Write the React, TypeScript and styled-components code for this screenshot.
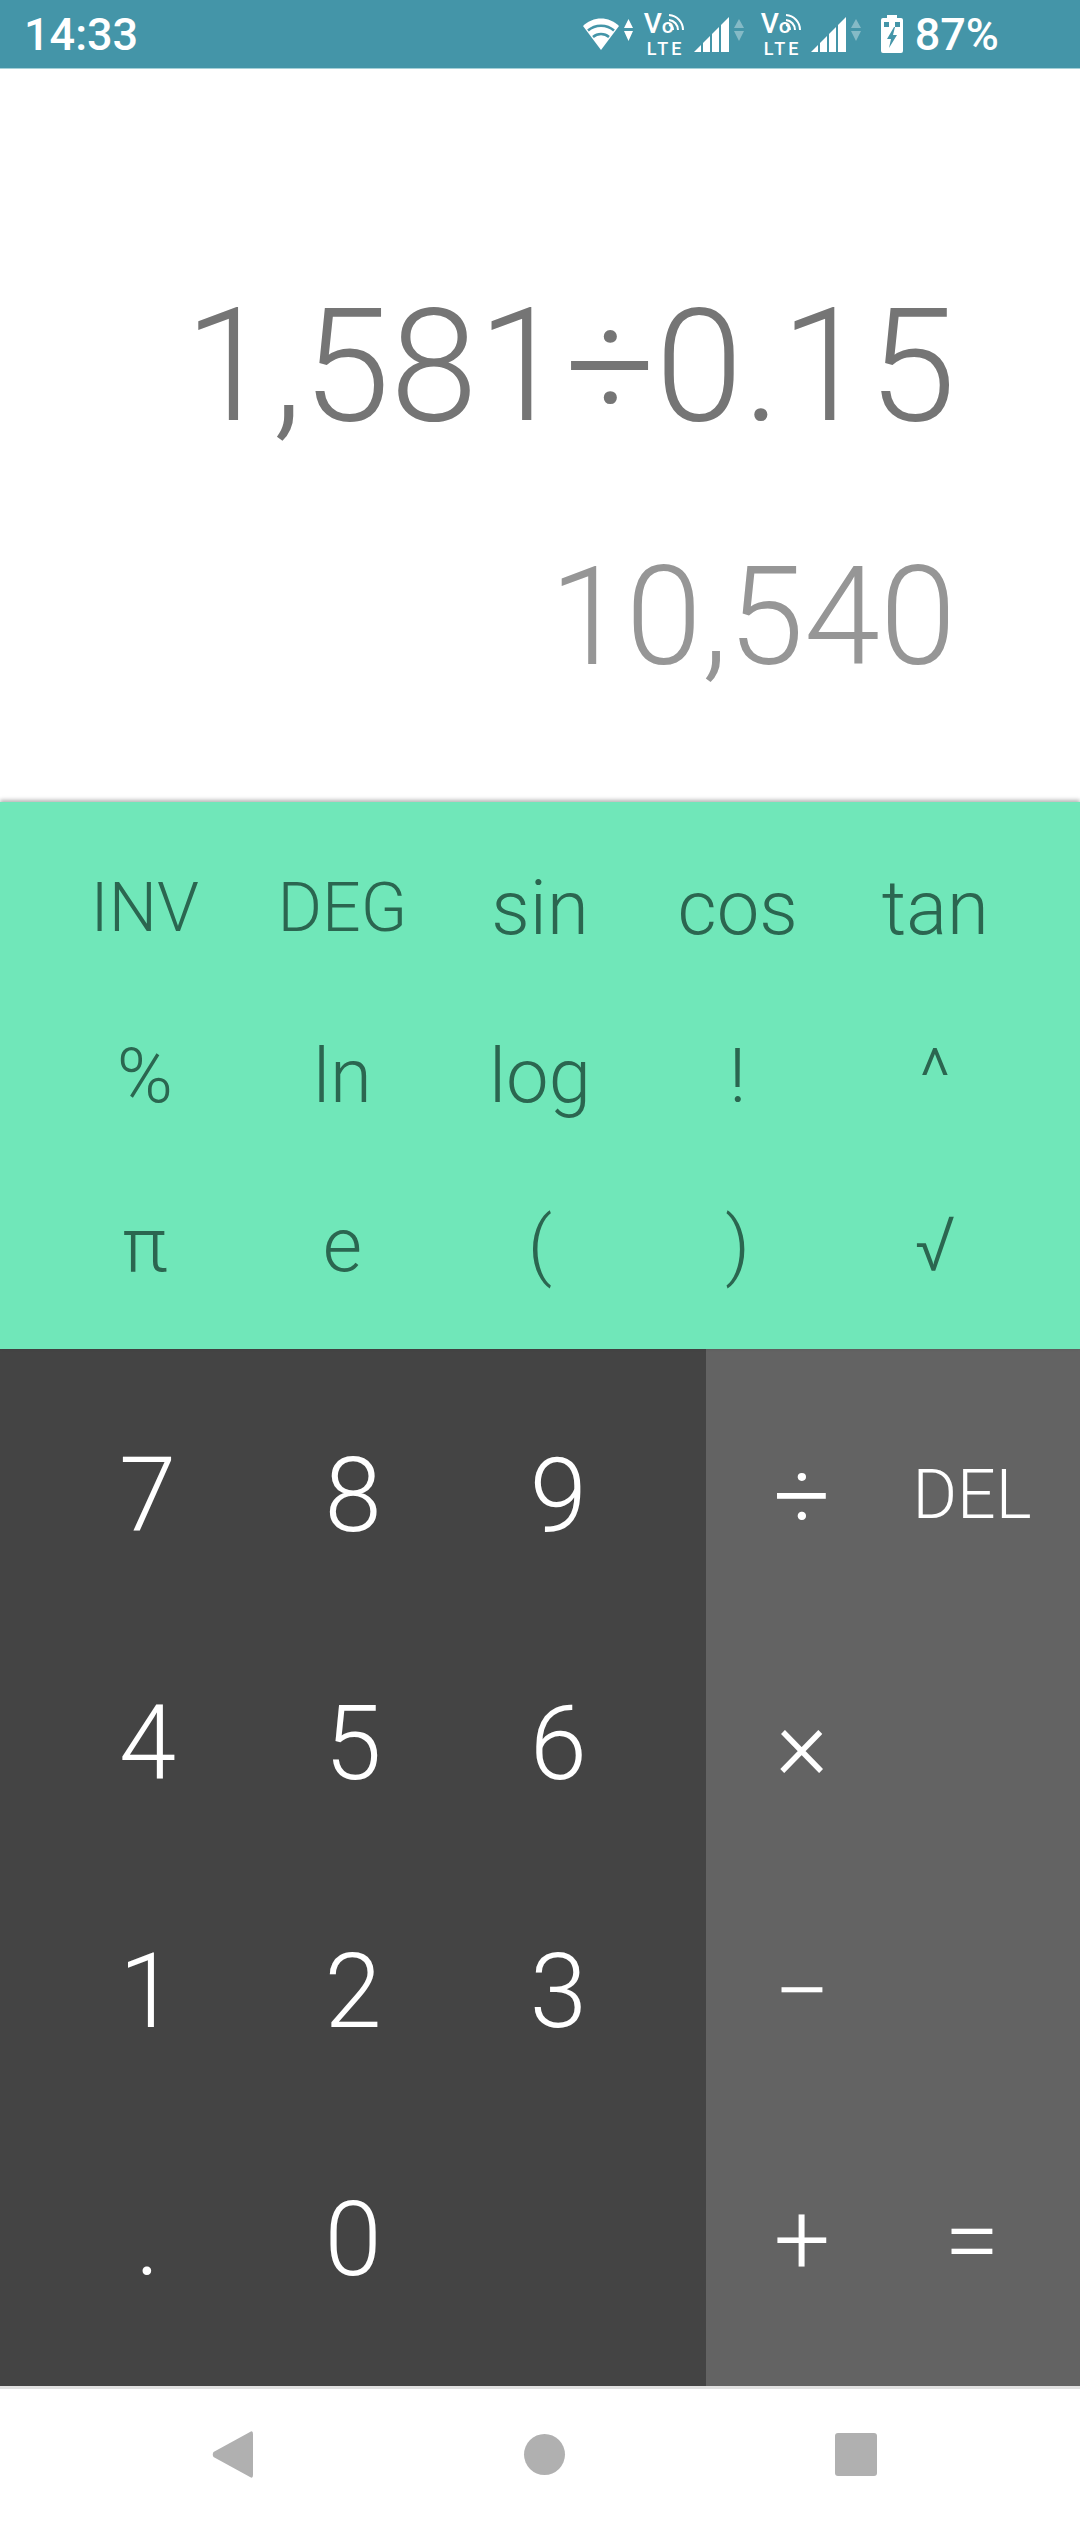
import React from 'react';
import styled, { createGlobalStyle } from 'styled-components';

const SCIENCE_KEYS = ['INV', 'DEG', 'sin', 'cos', 'tan', '%', 'ln', 'log', '!', '^', 'π', 'e', '(', ')', '√'];
const DIGIT_KEYS = ['7', '8', '9', '4', '5', '6', '1', '2', '3', '.', '0', ''];
const OPERATOR_KEYS = ['÷', 'DEL', '×', '', '−', '', '+', '='];

const WifiIcon = () => (
  <svg width="50" height="32" viewBox="0 0 50 32" fill="none">
    <path d="M0 8 C10 -2 26 -2 36 8 L18 32 Z" fill="#fff" />
    <path d="M5 12.5 C12 6 24 6 31 12.5 M10 19 C14.5 15 21.5 15 26 19" stroke="#4495a8" strokeWidth="2.5" />
    <path d="M45.5 1 L50 10 L41 10 Z M41 13 L50 13 L45.5 23 Z" fill="#fff" />
  </svg>
);

const VolteIcon = () => (
  <VolteWrap>
    <VoRow>
      V<SmallO>o</SmallO>
      <svg width="17" height="19" viewBox="0 0 17 19" fill="none" stroke="#fff" strokeWidth="2">
        <path d="M1 3 A15 15 0 0 1 15 18 M1 8 A10 10 0 0 1 10 18 M1 13 A5 5 0 0 1 5 18" />
      </svg>
    </VoRow>
    <LteRow>LTE</LteRow>
  </VolteWrap>
);

const SignalIcon = () => (
  <svg width="50" height="35" viewBox="0 0 50 35" fill="#fff">
    <path d="M0 35 L7 28 L7 35 Z" />
    <path d="M9 26 L16 19 L16 35 L9 35 Z" />
    <path d="M18 17 L25 10 L25 35 L18 35 Z" />
    <path d="M27 8 L35 0 L35 35 L27 35 Z" />
    <path d="M45 2 L50 11 L40 11 Z M40 14 L50 14 L45 24 Z" fillOpacity="0.35" />
  </svg>
);

const BatteryIcon = () => (
  <svg width="22" height="38" viewBox="0 0 22 38">
    <path d="M6 0 H16 V3 H20 Q22 3 22 5 V36 Q22 38 20 38 H2 Q0 38 0 36 V5 Q0 3 2 3 H6 Z" fill="#fff" />
    <path d="M3 7 H8 V12 H3 Z M14 7 H19 V12 H14 Z" fill="#4495a8" />
    <path d="M13 12 L6 24 H10 L8 33 L16 20 H12 L14 12 Z" fill="#4495a8" />
  </svg>
);

const BackIcon = () => (
  <svg width="42" height="47" viewBox="0 0 42 47">
    <path d="M38 1 Q41 -1 41 3 V44 Q41 48 38 46 L1.5 26 Q0 23.5 1.5 21 Z" fill="#b0b0b0" />
  </svg>
);

export default function App() {
  return (
    <Screen>
      <GlobalStyle />
      <StatusBar>
        <Clock>14:33</Clock>
        <StatusIcons>
          <WifiIcon />
          <SimGroup $gap={11}>
            <VolteIcon />
            <SignalIcon />
          </SimGroup>
          <SimGroup $gap={17}>
            <VolteIcon />
            <SignalIcon />
          </SimGroup>
          <BatteryGroup>
            <BatteryIcon />
            <BatteryText>87%</BatteryText>
          </BatteryGroup>
        </StatusIcons>
      </StatusBar>
      <Display>
        <Formula>1,581÷0.15</Formula>
        <Result>10,540</Result>
      </Display>
      <SciencePad>
        {SCIENCE_KEYS.map(key => (
          <ScienceKey key={key} $caps={key === 'INV' || key === 'DEG'}>
            {key}
          </ScienceKey>
        ))}
      </SciencePad>
      <Keypad>
        <DigitPad>
          {DIGIT_KEYS.map((key, i) => (
            <DigitKey key={i}>{key}</DigitKey>
          ))}
        </DigitPad>
        <OperatorPad>
          {OPERATOR_KEYS.map((key, i) => (
            <OperatorKey key={i} $small={key === 'DEL'}>
              {key}
            </OperatorKey>
          ))}
        </OperatorPad>
      </Keypad>
      <NavBar>
        <BackIcon />
        <HomeDot />
        <RecentSquare />
      </NavBar>
    </Screen>
  );
}

const GlobalStyle = createGlobalStyle`
  html, body {
    margin: 0;
    padding: 0;
    background: #fff;
  }
`;

const Screen = styled.div`
  width: 1080px;
  height: 2523px;
  display: flex;
  flex-direction: column;
  font-family: Roboto, 'Liberation Sans', sans-serif;
  font-weight: 300;
  overflow: hidden;
`;

const StatusBar = styled.div`
  height: 69px;
  flex: none;
  background: #4495a8;
  border-bottom: 1px solid #a5d0d8;
  box-sizing: border-box;
  display: flex;
  align-items: center;
  justify-content: space-between;
  padding: 0 81px 0 24px;
  color: #fff;
`;

const Clock = styled.div`
  font-size: 45px;
  font-weight: 500;
`;

const StatusIcons = styled.div`
  display: flex;
  align-items: center;
`;

const SimGroup = styled.div<{ $gap: number }>`
  display: flex;
  align-items: center;
  gap: 8px;
  margin-left: ${props => props.$gap}px;
`;

const BatteryGroup = styled.div`
  display: flex;
  align-items: center;
  gap: 12px;
  margin-left: 20px;
`;

const BatteryText = styled.div`
  font-size: 45px;
  font-weight: 500;
`;

const VolteWrap = styled.div`
  display: flex;
  flex-direction: column;
  width: 42px;
  font-weight: 500;
`;

const VoRow = styled.div`
  display: flex;
  align-items: baseline;
  font-size: 28px;
  height: 20px;
  line-height: 20px;

  svg {
    align-self: flex-start;
    margin: -2px 0 0 -6px;
    flex: none;
  }
`;

const SmallO = styled.span`
  font-size: 21px;
`;

const LteRow = styled.div`
  font-size: 18px;
  line-height: 13px;
  letter-spacing: 3px;
  margin: 8px 0 0 3px;
`;

const Display = styled.div`
  height: 733px;
  flex: none;
  background: #fff;
  display: flex;
  flex-direction: column;
  align-items: flex-end;
  padding: 0 124px 0 0;
  box-sizing: border-box;
`;

const Formula = styled.div`
  font-size: 158px;
  line-height: 190px;
  color: #757575;
  margin-top: 202px;
  white-space: nowrap;
`;

const Result = styled.div`
  font-size: 137px;
  line-height: 150px;
  color: #969696;
  margin-top: 81px;
  white-space: nowrap;
`;

const SciencePad = styled.div`
  height: 547px;
  flex: none;
  box-sizing: border-box;
  padding: 22px 46px 20px 46px;
  background: #70e7b9;
  box-shadow: 0 -2px 4px rgba(0, 0, 0, 0.3);
  display: grid;
  grid-template-columns: repeat(5, 1fr);
  grid-template-rows: repeat(3, 1fr);
  position: relative;
`;

const ScienceKey = styled.div<{ $caps?: boolean }>`
  display: flex;
  align-items: center;
  justify-content: center;
  font-size: ${props => (props.$caps ? '68px' : '76px')};
  color: #2b6650;
`;

const Keypad = styled.div`
  height: 1037px;
  flex: none;
  display: flex;
`;

const DigitPad = styled.div`
  width: 706px;
  box-sizing: border-box;
  padding: 22px 45px;
  background: #444444;
  display: grid;
  grid-template-columns: repeat(3, 1fr);
  grid-template-rows: repeat(4, 1fr);
`;

const DigitKey = styled.div`
  display: flex;
  align-items: center;
  justify-content: center;
  font-size: 103px;
  color: #fff;
`;

const OperatorPad = styled.div`
  flex: 1;
  box-sizing: border-box;
  padding: 22px 23px 22px 11px;
  background: #636363;
  display: grid;
  grid-template-columns: repeat(2, 1fr);
  grid-template-rows: repeat(4, 1fr);
`;

const OperatorKey = styled.div<{ $small?: boolean }>`
  display: flex;
  align-items: center;
  justify-content: center;
  font-size: ${props => (props.$small ? '68px' : '100px')};
  color: #fff;
`;

const NavBar = styled.div`
  flex: 1;
  background: #fff;
  border-top: 3px solid #e0e0e0;
  box-sizing: border-box;
  display: flex;
  align-items: center;
  justify-content: center;
  gap: 270px;
  padding: 0 0 3px 8px;
`;

const HomeDot = styled.div`
  width: 41px;
  height: 41px;
  border-radius: 50%;
  background: #b0b0b0;
`;

const RecentSquare = styled.div`
  width: 42px;
  height: 43px;
  border-radius: 3px;
  background: #b0b0b0;
`;
